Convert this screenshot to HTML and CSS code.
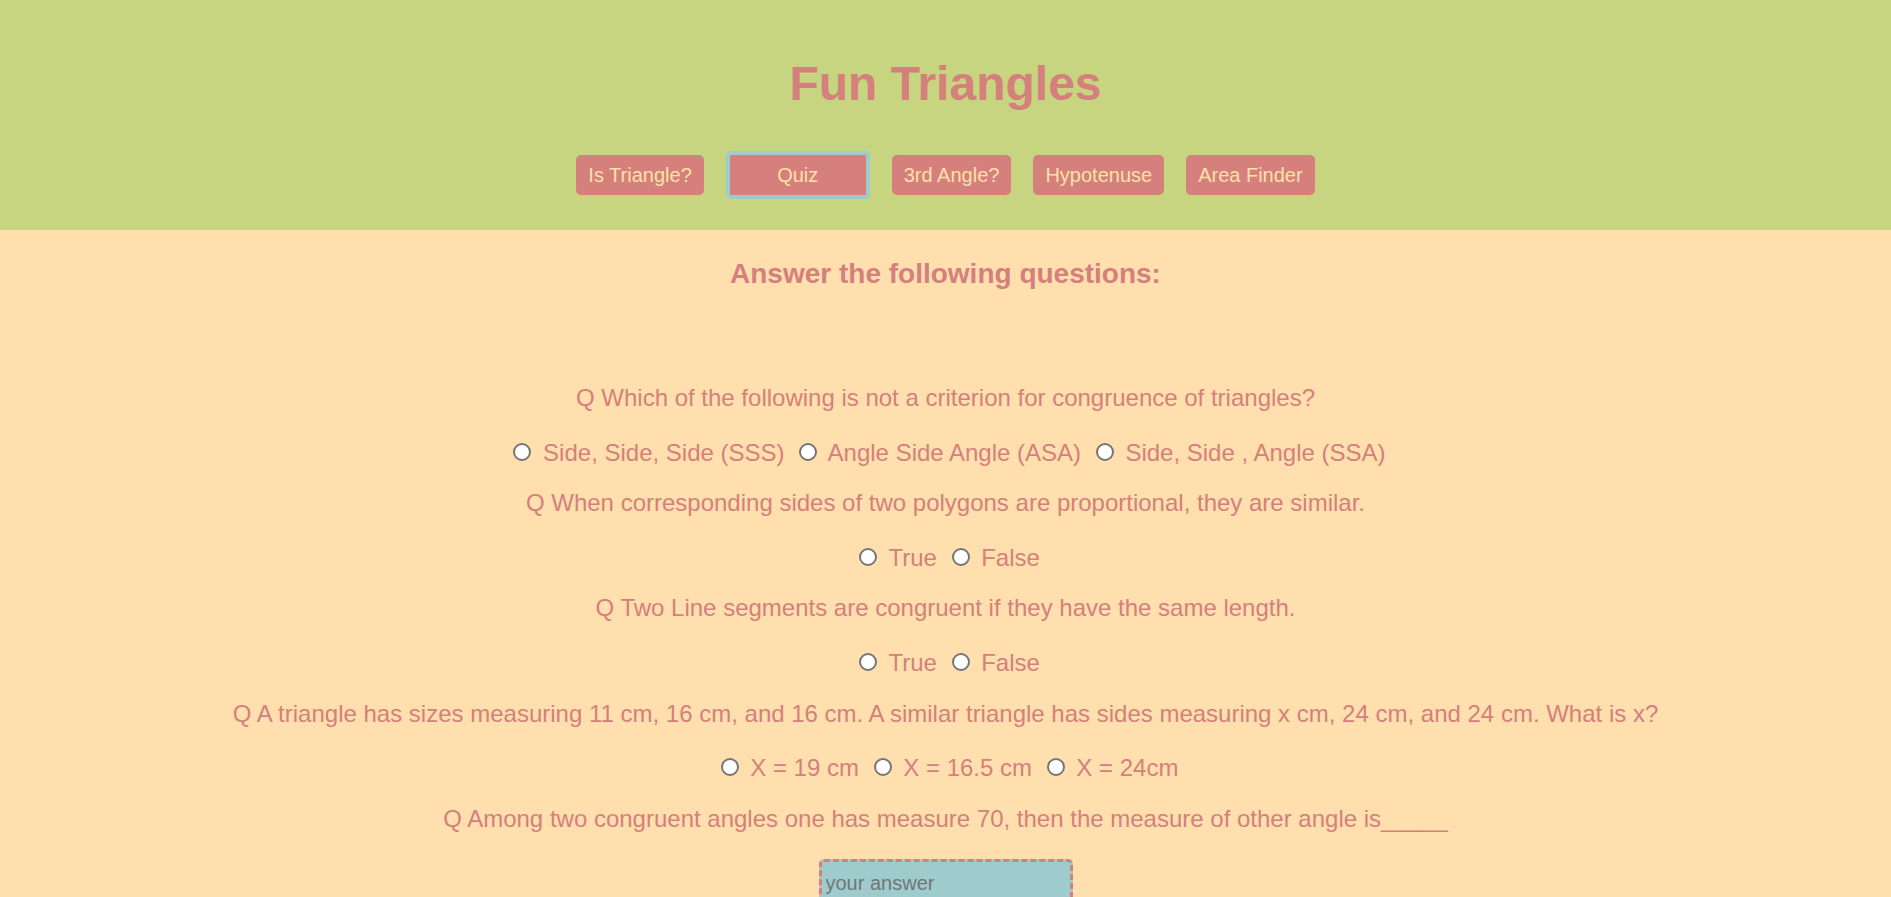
FILE: index.html
```html
<!DOCTYPE html>
<html lang="en">
<head>
<meta charset="utf-8">
<title>Fun Triangles</title>
<link rel="stylesheet" href="styles.css">
</head>
<body>
<header class="site-header">
  <h1 class="title">Fun Triangles</h1>
  <nav class="nav">
    <button class="nav-btn" type="button">Is Triangle?</button>
    <button class="nav-btn nav-btn-active" type="button">Quiz</button>
    <button class="nav-btn" type="button">3rd Angle?</button>
    <button class="nav-btn" type="button">Hypotenuse</button>
    <button class="nav-btn" type="button">Area Finder</button>
  </nav>
</header>
<main class="quiz">
  <h3 class="quiz-heading">Answer the following questions:</h3>
  <form class="quiz-form">
    <p class="line">Q Which of the following is not a criterion for congruence of triangles?</p>
    <p class="line line-options"><input class="radio" type="radio" name="q1"> Side, Side, Side (SSS) <input class="radio" type="radio" name="q1"> Angle Side Angle (ASA) <input class="radio" type="radio" name="q1"> Side, Side , Angle (SSA)</p>
    <p class="line">Q When corresponding sides of two polygons are proportional, they are similar.</p>
    <p class="line line-options"><input class="radio" type="radio" name="q2"> True <input class="radio" type="radio" name="q2"> False</p>
    <p class="line">Q Two Line segments are congruent if they have the same length.</p>
    <p class="line line-options"><input class="radio" type="radio" name="q3"> True <input class="radio" type="radio" name="q3"> False</p>
    <p class="line">Q A triangle has sizes measuring 11 cm, 16 cm, and 16 cm. A similar triangle has sides measuring x cm, 24 cm, and 24 cm. What is x?</p>
    <p class="line line-options"><input class="radio" type="radio" name="q4"> X = 19 cm <input class="radio" type="radio" name="q4"> X = 16.5 cm <input class="radio" type="radio" name="q4"> X = 24cm</p>
    <p class="line">Q Among two congruent angles one has measure 70, then the measure of other angle is_____</p>
    <input class="answer" type="text" placeholder="your answer">
  </form>
</main>
</body>
</html>
```
FILE: styles.css
```css
body {
  margin: 0;
  background: #ffdfad;
  font-family: "Liberation Sans", Arial, sans-serif;
  color: #d5807c;
}

.site-header {
  background: #c7d580;
  padding: 56px 0 31px;
  text-align: center;
}

.title {
  margin: 0;
  font-size: 48px;
  line-height: 55px;
  font-weight: bold;
  color: #d5807c;
}

.nav {
  margin-top: 40px;
  display: flex;
  justify-content: center;
  align-items: center;
  gap: 22px;
}

.nav-btn {
  height: 40px;
  padding: 0 12px;
  border: none;
  border-radius: 5px;
  background: #d5807c;
  color: #fde0a8;
  font-family: "Liberation Sans", Arial, sans-serif;
  font-size: 20px;
  line-height: 23px;
  cursor: pointer;
}

.nav-btn-active {
  width: 144px;
  height: 48px;
  padding: 0;
  border: 4px solid #9fcbcc;
  border-radius: 5px;
}

.quiz {
  text-align: center;
}

.quiz-heading {
  margin: 28px 0 94px;
  font-size: 28px;
  line-height: 32px;
  font-weight: bold;
}

.quiz-form {
  margin: 0;
}

.line {
  margin: 25px 0;
  font-size: 24px;
  line-height: 27.6px;
}

.line-options {
  padding-top: 2px;
  margin-bottom: -2px;
}

.radio {
  -webkit-appearance: none;
  appearance: none;
  box-sizing: border-box;
  width: 18px;
  height: 18px;
  margin: 0 5px 0 8px;
  border: 2px solid #767676;
  border-radius: 50%;
  background: #fff;
  vertical-align: baseline;
}

.answer {
  display: block;
  box-sizing: border-box;
  width: 254px;
  height: 50px;
  margin: 26.6px auto 0;
  padding: 0 4px;
  background: #9fcbcc;
  border: 3px dashed #d5807c;
  border-radius: 5px;
  font-family: "Liberation Sans", Arial, sans-serif;
  font-size: 20px;
  color: #555;
}

.answer::placeholder {
  color: #6f7777;
}
```
